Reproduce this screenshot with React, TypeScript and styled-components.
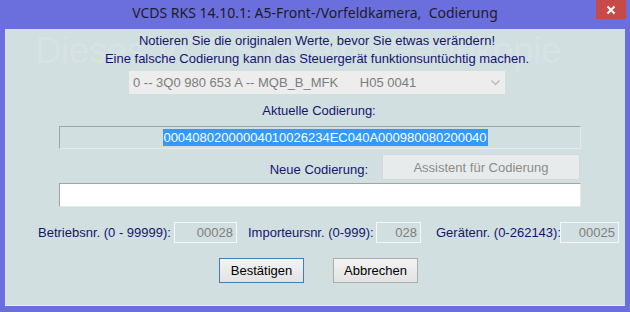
import React from "react";
import styled, { createGlobalStyle } from "styled-components";

const Global = createGlobalStyle`
  html, body { margin: 0; padding: 0; }
  body { width: 630px; height: 312px; overflow: hidden; background: #6b6fdd; }
  * { box-sizing: border-box; }
`;

const Frame = styled.div`
  width: 630px;
  height: 312px;
  background: #6b6fdd;
  display: flex;
  flex-direction: column;
  font-family: "Liberation Sans", Arial, sans-serif;
`;

const TitleBar = styled.div`
  height: 29px;
  position: relative;
  display: flex;
  align-items: center;
  justify-content: center;
  padding-bottom: 5px;
  font-family: "Noto Sans", "Open Sans", sans-serif;
  font-size: 14px;
  color: #1b1b2a;
`;

const CloseBtn = styled.div`
  position: absolute;
  top: 0;
  right: 4px;
  width: 30px;
  height: 19px;
  background: #c74a48;
  display: flex;
  align-items: center;
  justify-content: center;
`;

const Client = styled.div`
  position: relative;
  margin: 0 5px;
  height: 277px;
  background: #d2dfe1;
  border-bottom: 1px solid #e6eef0;
  display: flex;
  flex-direction: column;
  overflow: hidden;
`;

const Watermark = styled.div`
  position: absolute;
  left: 30px;
  top: 1px;
  font-size: 36px;
  color: #d7e2e4;
  white-space: nowrap;
  pointer-events: none;
`;

const Notice = styled.div`
  position: relative;
  padding-top: 3px;
  text-align: center;
  font-size: 13px;
  line-height: 18px;
  color: #14146e;
  padding-left: 4px;
`;

const Select = styled.div`
  position: relative;
  margin: 3px 0 0 124px;
  width: 376px;
  height: 23px;
  background: #ecedec;
  display: flex;
  align-items: center;
  padding-left: 4px;
  font-size: 13px;
  color: #7c7c7c;
  white-space: pre;
`;

const Chevron = styled.svg`
  position: absolute;
  right: 5px;
  top: 9px;
`;

const CenterLabel = styled.div`
  text-align: center;
  font-size: 13px;
  line-height: 16px;
  color: #14146e;
  margin-top: 9px;
  padding-left: 8px;
`;

const Field = styled.div<{ $white?: boolean; $top: number }>`
  margin: ${(p) => p.$top}px 0 0 54px;
  width: 522px;
  height: ${(p) => (p.$white ? 24 : 23)}px;
  background: ${(p) => (p.$white ? "#ffffff" : "#d2dfe1")};
  border: 1px solid;
  border-color: #9fa5a7 #e3eaec #e3eaec #9fa5a7;
  display: flex;
  align-items: center;
  justify-content: center;
`;

const Selected = styled.span`
  background: #3399ff;
  color: #ffffff;
  font-size: 13px;
  line-height: 17px;
  padding: 0 1px 0 0;
  margin-left: 11px;
`;

const NewRow = styled.div`
  margin: 5px 0 0 54px;
  width: 521px;
  height: 26px;
  display: flex;
  align-items: center;
  justify-content: flex-end;
  gap: 14px;
  font-size: 13px;
  color: #14146e;
`;

const NewLabel = styled.span`
  padding-top: 4px;
`;

const WizardButton = styled.div`
  width: 198px;
  height: 26px;
  background: #e8ebeb;
  border: 1px solid #d5d9da;
  display: flex;
  align-items: center;
  justify-content: center;
  font-size: 13px;
  color: #8b8b8b;
`;

const NumRow = styled.div`
  margin-top: 15px;
  padding-left: 33px;
  display: flex;
  align-items: center;
  font-size: 13px;
  color: #14146e;
`;

const NumLabel = styled.span<{ $w: number }>`
  width: ${(p) => p.$w}px;
  white-space: nowrap;
`;

const NumBox = styled.div<{ $w: number; $after: number }>`
  width: ${(p) => p.$w}px;
  height: 21px;
  margin-right: ${(p) => p.$after}px;
  border: 1px solid #f3f7f7;
  display: flex;
  align-items: center;
  justify-content: flex-end;
  padding-right: 3px;
  font-size: 13px;
  color: #7e7e7e;
`;

const ButtonRow = styled.div`
  margin: 15px 0 0 214px;
  display: flex;
  gap: 29px;
`;

const Button = styled.div<{ $default?: boolean }>`
  width: 85px;
  height: 25px;
  background: linear-gradient(#f3f3f3, #e3e3e3);
  border: 1px solid ${(p) => (p.$default ? "#3c7fb1" : "#acacac")};
  display: flex;
  align-items: center;
  justify-content: center;
  font-size: 13px;
  color: #000;
`;

export default function App() {
  return (
    <>
      <Global />
      <Frame>
        <TitleBar>
          VCDS RKS 14.10.1: A5-Front-/Vorfeldkamera,&nbsp; Codierung
          <CloseBtn>
            <svg width="10" height="10" viewBox="0 0 10 10">
              <path d="M1.5 1.5 L8.5 8.5 M8.5 1.5 L1.5 8.5" stroke="#fff" strokeWidth="2" />
            </svg>
          </CloseBtn>
        </TitleBar>
        <Client>
          <Watermark>Dieses VCDS ist eine Raubkopie</Watermark>
          <Notice>
            Notieren Sie die originalen Werte, bevor Sie etwas verändern!
            <br />
            Eine falsche Codierung kann das Steuergerät funktionsuntüchtig machen.
          </Notice>
          <Select>
            {"0 -- 3Q0 980 653 A -- MQB_B_MFK      H05 0041"}
            <Chevron width="9" height="6" viewBox="0 0 9 6">
              <path d="M0.5 0.5 L4.5 4.5 L8.5 0.5" stroke="#b9b9b9" strokeWidth="1.3" fill="none" />
            </Chevron>
          </Select>
          <CenterLabel>Aktuelle Codierung:</CenterLabel>
          <Field $top={7}>
            <Selected>00040802000004010026234EC040A000980080200040</Selected>
          </Field>
          <NewRow>
            <NewLabel>Neue Codierung:</NewLabel>
            <WizardButton>Assistent für Codierung</WizardButton>
          </NewRow>
          <Field $white $top={3} />
          <NumRow>
            <NumLabel $w={136}>Betriebsnr. (0 - 99999):</NumLabel>
            <NumBox $w={63} $after={11}>00028</NumBox>
            <NumLabel $w={128}>Importeursnr. (0-999):</NumLabel>
            <NumBox $w={45} $after={15}>028</NumBox>
            <NumLabel $w={124}>Gerätenr. (0-262143):</NumLabel>
            <NumBox $w={59} $after={0}>00025</NumBox>
          </NumRow>
          <ButtonRow>
            <Button $default>Bestätigen</Button>
            <Button>Abbrechen</Button>
          </ButtonRow>
        </Client>
      </Frame>
    </>
  );
}
